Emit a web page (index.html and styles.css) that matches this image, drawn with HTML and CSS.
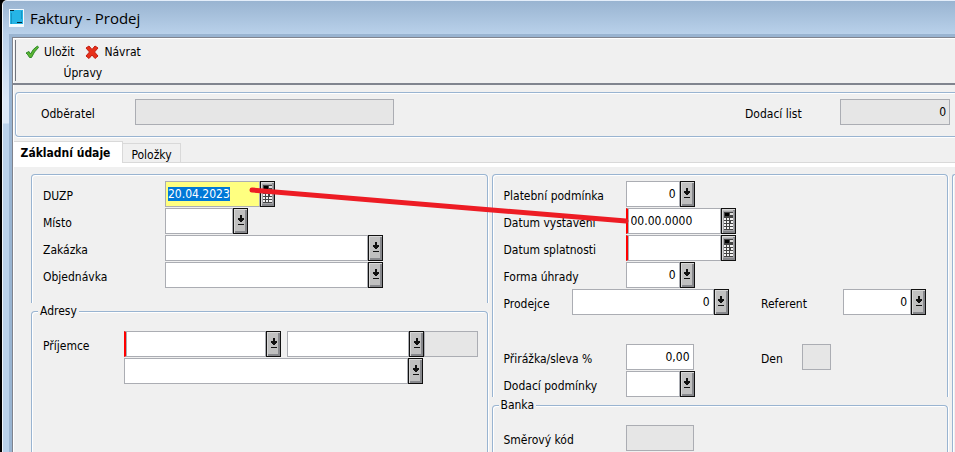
FILE: index.html
```html
<!DOCTYPE html>
<html lang="cs">
<head>
<meta charset="utf-8">
<meta name="viewport" content="width=device-width, initial-scale=1">
<title>Faktury - Prodej</title>
<link rel="stylesheet" href="styles.css">
</head>
<body>
<svg class="sprite" aria-hidden="true">
  <symbol id="arrow" viewBox="0 0 8 12">
    <path d="M3 0h2v3h2v2h-1v1h-1v1h-2v-1h-1v-1h-1v-2h2zM1 9h6v1h-6z" fill="#111"/>
  </symbol>
  <symbol id="calc" viewBox="0 0 11 20">
    <path d="M0 0h11v20h-11z" fill="#a4a4a8"/>
    <path d="M1 1h9v18h-9z" fill="#444"/>
    <path d="M2 2h4v3h-4z" fill="#000"/>
    <path d="M7 2h3v2h-3z" fill="#ddd"/>
    <path d="M1 7h2v2h-2zM4 7h2v2h-2zM7 7h3v2h-3zM1 10h2v2h-2zM4 10h2v2h-2zM8 10h2v2h-2zM1 13h2v2h-2zM4 13h2v2h-2zM7 13h3v2h-3zM1 16h2v2h-2zM4 16h2v2h-2zM7 16h3v2h-3z" fill="#f2f2f2"/>
  </symbol>
</svg>
<div class="window">
  <header class="titlebar">
    <svg class="app-icon" viewBox="0 0 15 18" aria-hidden="true">
      <path d="M0 0h15v18H0z" fill="#f4fbff"/>
      <path d="M1 1h13v14H1z" fill="#26b5e6"/>
      <path d="M1 1h4v1H1zM8 13h5v1H8z" fill="#062a3a"/>
      <path d="M2 4h1v11h-1zM12 2h1v8h-1z" fill="#1796c4"/>
    </svg>
    <h1>Faktury - Prodej</h1>
  </header>
  <main class="client">
    <div class="toolbar">
      <div class="toolbar-group">
        <div class="toolbar-actions">
          <button type="button" class="action">
            <svg class="action-icon" viewBox="0 0 14 14" aria-hidden="true">
              <path d="M1 8l3-1.500 1.500 2.500Q8 3.500 12.500 1L13.500 2.500Q9 6.500 6.500 12.500H4.500Q3 9.500 1 8z" fill="#5cb531" stroke="#2f8a2c"/>
            </svg>Uložit</button>
          <button type="button" class="action">
            <svg class="action-icon" viewBox="0 0 14 14" aria-hidden="true">
              <path d="M1 3l3-2 3 3.500 3-3.500 3 2-3.500 4 3.500 4-3 2.500-3-3.500-3 3.500-3-2.500 3.500-4z" fill="#e8301a" stroke="#c11c10"/>
            </svg>Návrat</button>
        </div>
        <div class="toolbar-caption">Úpravy</div>
      </div>
    </div>

    <section class="summary">
      <label class="customer-label" for="odberatel">Odběratel</label>
      <input class="field customer" id="odberatel" type="text" readonly>
      <label class="delivery-label" for="dodaci-list">Dodací list</label>
      <input class="field num w-110" id="dodaci-list" type="text" value="0" readonly>
    </section>

    <nav class="tabs" role="tablist">
      <button type="button" class="tab active" role="tab" aria-selected="true">Základní údaje</button>
      <button type="button" class="tab" role="tab" aria-selected="false">Položky</button>
    </nav>

    <div class="panel">
      <div class="column">
        <section class="group open">
          <div class="row"><label for="duzp">DUZP</label>
            <input class="field current w-95" id="duzp" type="text" value="20.04.2023"><button type="button" class="pick" aria-label="Kalendář"><svg class="calc"><use href="#calc"/></svg></button></div>
          <div class="row"><label for="misto">Místo</label>
            <input class="field w-68" id="misto" type="text"><button type="button" class="pick" aria-label="Vybrat"><svg class="arrow"><use href="#arrow"/></svg></button></div>
          <div class="row"><label for="zakazka">Zakázka</label>
            <input class="field w-203" id="zakazka" type="text"><button type="button" class="pick" aria-label="Vybrat"><svg class="arrow"><use href="#arrow"/></svg></button></div>
          <div class="row"><label for="objednavka">Objednávka</label>
            <input class="field w-203" id="objednavka" type="text"><button type="button" class="pick" aria-label="Vybrat"><svg class="arrow"><use href="#arrow"/></svg></button></div>
        </section>
        <fieldset class="group last">
          <legend>Adresy</legend>
          <div class="address">
            <label for="prijemce">Příjemce</label>
            <div class="address-fields">
              <div class="line">
                <input class="field required w-142" id="prijemce" type="text"><button type="button" class="pick" aria-label="Vybrat"><svg class="arrow"><use href="#arrow"/></svg></button>
                <input class="field second w-122" type="text" aria-label="Místo příjemce"><button type="button" class="pick" aria-label="Vybrat"><svg class="arrow"><use href="#arrow"/></svg></button>
                <input class="field w-54" type="text" readonly aria-label="Kód">
              </div>
              <div class="line">
                <input class="field w-284" type="text" aria-label="Adresa"><button type="button" class="pick" aria-label="Vybrat"><svg class="arrow"><use href="#arrow"/></svg></button>
              </div>
            </div>
          </div>
        </fieldset>
      </div>

      <div class="column">
        <section class="group">
          <div class="row"><label for="platba">Platební podmínka</label>
            <input class="field num w-54" id="platba" type="text" value="0"><button type="button" class="pick" aria-label="Vybrat"><svg class="arrow"><use href="#arrow"/></svg></button></div>
          <div class="row"><label for="vystaveni">Datum vystavení</label>
            <input class="field required w-95" id="vystaveni" type="text" value="00.00.0000"><button type="button" class="pick" aria-label="Kalendář"><svg class="calc"><use href="#calc"/></svg></button></div>
          <div class="row"><label for="splatnost">Datum splatnosti</label>
            <input class="field required w-95" id="splatnost" type="text"><button type="button" class="pick" aria-label="Kalendář"><svg class="calc"><use href="#calc"/></svg></button></div>
          <div class="row"><label for="uhrada">Forma úhrady</label>
            <input class="field num w-54" id="uhrada" type="text" value="0"><button type="button" class="pick" aria-label="Vybrat"><svg class="arrow"><use href="#arrow"/></svg></button></div>
          <div class="row"><label class="short" for="prodejce">Prodejce</label>
            <input class="field num w-142" id="prodejce" type="text" value="0"><button type="button" class="pick" aria-label="Vybrat"><svg class="arrow"><use href="#arrow"/></svg></button>
            <span class="aside"><label class="wide" for="referent">Referent</label>
            <input class="field num w-68" id="referent" type="text" value="0"><button type="button" class="pick" aria-label="Vybrat"><svg class="arrow"><use href="#arrow"/></svg></button></span></div>
          <div class="row spaced"><label for="sleva">Přirážka/sleva %</label>
            <input class="field num w-68" id="sleva" type="text" value="0,00">
            <span class="aside"><label class="narrow" for="den">Den</label>
            <input class="field w-29" id="den" type="text" readonly></span></div>
          <div class="row"><label for="dodaci-podminky">Dodací podmínky</label>
            <input class="field w-54" id="dodaci-podminky" type="text"><button type="button" class="pick" aria-label="Vybrat"><svg class="arrow"><use href="#arrow"/></svg></button></div>
        </section>
        <fieldset class="group last">
          <legend>Banka</legend>
          <div class="row"><label for="smerovy-kod">Směrový kód</label>
            <input class="field w-68" id="smerovy-kod" type="text" readonly></div>
        </fieldset>
      </div>

      <div class="column"><section class="group edge"></section></div>

      <svg class="connector" aria-hidden="true"><path d="M238 23L612 54"/></svg>
    </div>
  </main>
</div>
<script src="script.js"></script>
</body>
</html>
```

FILE: styles.css
```css
* {
  box-sizing: border-box;
}

body {
  margin: 0;
  background: #000;
  color: #000;
  font: 12px/16px "DejaVu Sans Condensed", "DejaVu Sans", "Noto Sans", sans-serif;
  font-stretch: condensed;
}

button,
input {
  font: inherit;
  color: inherit;
}

.sprite {
  position: absolute;
  width: 0;
  height: 0;
}

.window {
  min-height: 100vh;
  margin-left: 2px;
  padding-left: 6px;
  display: flex;
  flex-direction: column;
  border-top: 1px solid #e4eefa;
  border-left: 1px solid #f0f5fb;
  border-top-left-radius: 5px;
  background: linear-gradient(#99b4d1, #b9d1ea 34px, #dce9f7 100px, #dce9f7 122px, #b9d1ea 123px);
}

.titlebar {
  height: 33px;
  margin-left: -6px;
  padding-left: 6px;
  display: flex;
  align-items: center;
  gap: 6px;
  background: linear-gradient(#99b4d1, #b9d1ea);
  border-top-left-radius: 5px;
}

.app-icon {
  width: 15px;
  height: 18px;
}

h1 {
  margin: 0;
  font: 15px/20px "Open Sans", "Noto Sans", sans-serif;
}

.client {
  flex: 1;
  display: flex;
  flex-direction: column;
  border-top: 3px solid #99b4d1;
  border-left: 3px solid #99b4d1;
  background: #f0f0f0;
  box-shadow: inset 1px 1px #80848e, inset 2px 2px #fff;
  padding: 1px 0 0 2px;
}

.toolbar {
  margin-left: -1px;
  padding: 2px 2px;
  border-bottom: 2px solid #80848e;
}

.toolbar-group {
  height: 41px;
  width: max-content;
  padding: 4px 0 0 9px;
  border-left: 1px solid #70747c;
}

.toolbar-actions {
  display: flex;
  gap: 11px;
}

.action {
  display: flex;
  align-items: center;
  gap: 5px;
  padding: 0;
  border: 0;
  background: none;
}

.action-icon {
  width: 14px;
  height: 14px;
}

.toolbar-caption {
  margin-top: 5px;
  text-align: center;
}

.summary {
  margin: 7px 0 4px 1px;
  height: 45px;
  padding: 6px 5px 0 25px;
  display: flex;
  align-items: flex-start;
  border: 1px solid #99b4d1;
  border-right: 0;
  border-radius: 4px 0 0 4px;
  box-shadow: inset 1px 1px #fff, 0 1px #fff;
}

.summary label {
  padding-top: 7px;
}

.customer-label {
  width: 94px;
}

.customer {
  width: 259px;
}

.delivery-label {
  width: 95px;
  margin-left: auto;
}

.tabs {
  display: flex;
  align-items: flex-end;
  height: 26px;
  border-bottom: 4px solid #fff;
  box-shadow: inset 0 -1px #d9d9d9;
}

.tab {
  height: 20px;
  padding: 3px 0 0;
  width: 58px;
  border: 1px solid #d9d9d9;
  border-left: 0;
  background: #f0f0f0;
}

.tab.active {
  width: 109px;
  height: 22px;
  padding: 0 5px 0 0;
  border-bottom: 0;
  background: #fff;
  font-weight: bold;
}

.panel {
  position: relative;
  flex: 1;
  display: grid;
  grid-template-columns: minmax(0, 1fr) minmax(0, 1fr) 3px;
  gap: 4px;
  padding: 7px 0 0 17px;
}

.column {
  display: flex;
  flex-direction: column;
}

.group {
  min-width: 0;
  margin: 0;
  padding: 6px 0 0 11px;
  display: flex;
  flex-direction: column;
  gap: 1px;
  border: 1px solid #99b4d1;
  border-bottom: 0;
  border-radius: 4px 4px 0 0;
  box-shadow: inset 1px 1px #fff, 1px 0 #fff;
}

.group.open {
  padding-bottom: 15px;
}

.group.last {
  flex: 1;
  padding-top: 12px;
}

.group.edge {
  flex: 1;
  padding: 0;
  border-right: 0;
  border-radius: 4px 0 0 0;
}

legend {
  margin-left: -5px;
  padding: 0 2px;
  background: #f0f0f0;
}

.row,
.line,
.aside,
.address {
  display: flex;
}

.row.spaced {
  margin-top: 28px;
}

.row label,
.address label {
  flex: none;
  width: 122px;
  padding-top: 7px;
}

.row label.short {
  width: 68px;
}

.address label {
  width: 81px;
}

.aside {
  margin-left: auto;
  width: 186px;
}

.row .aside label.wide {
  width: 82px;
}

.row .aside label.narrow {
  width: 41px;
}

.address-fields {
  display: grid;
  gap: 1px;
}

.field {
  height: 26px;
  margin: 0;
  padding: 0 3px 0 2px;
  border: 1px solid #abadb3;
  border-radius: 0;
  outline: 0;
  background: #fff;
}

.field:read-only {
  background: #e6e6e6;
}

.field.num {
  text-align: right;
}

.field.current {
  background: #ffff80;
}

.field::selection {
  background: #0078d7;
  color: #fff;
}

.field.required {
  padding-left: 3px;
  border-left: 2px solid #f00;
  box-shadow: inset 1px 0 #abadb3;
}

.field.second {
  margin-left: 6px;
}

.w-29 { width: 29px; }
.w-54 { width: 54px; }
.w-68 { width: 68px; }
.w-95 { width: 95px; }
.w-110 { width: 110px; }
.w-122 { width: 122px; }
.w-142 { width: 142px; }
.w-203 { width: 203px; }
.w-284 { width: 284px; }

.pick {
  flex: none;
  width: 15px;
  height: 26px;
  padding: 0;
  display: grid;
  place-items: center;
  border: 1px solid #111;
  background: #c0c0c0;
  box-shadow: inset 1px 1px #d8d8d8, inset -2px -2px #87888c;
}

.arrow {
  width: 8px;
  height: 12px;
}

.calc {
  width: 11px;
  height: 20px;
}

.connector {
  position: absolute;
  left: 0;
  top: 0;
  width: 100%;
  height: 100%;
  pointer-events: none;
}

.connector path {
  fill: none;
  stroke: #ed1c24;
  stroke-width: 5;
  stroke-linecap: round;
}
```

FILE: script.js
```js
const current = document.getElementById("duzp");
current.focus();
current.select();
```
